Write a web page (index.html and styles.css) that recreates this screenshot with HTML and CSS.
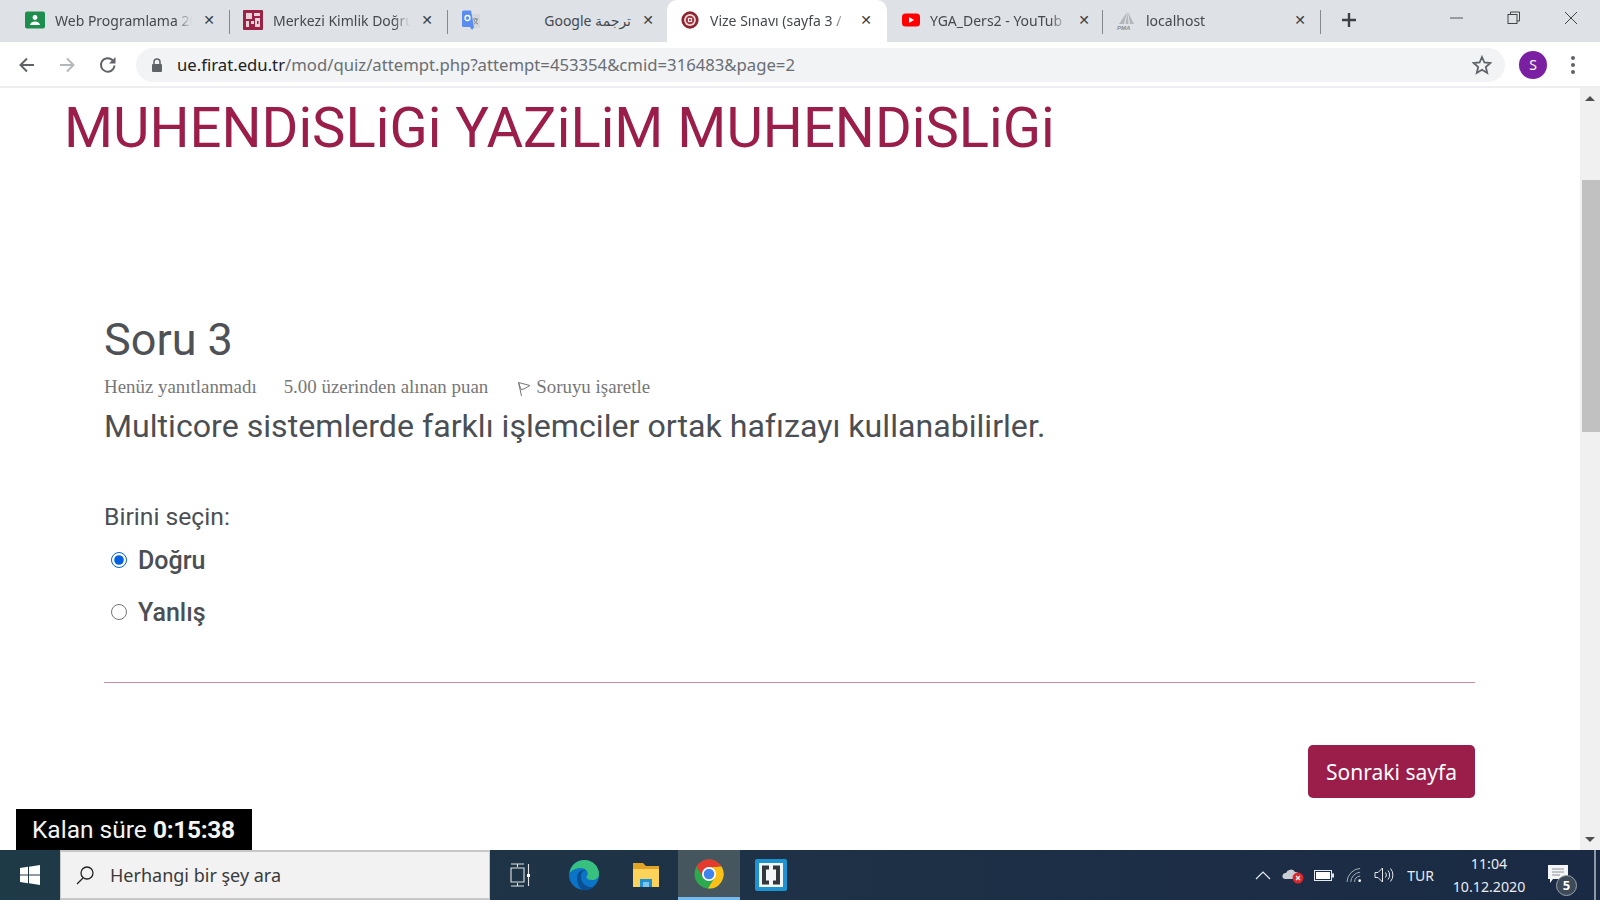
FILE: index.html
```html
<!DOCTYPE html>
<html lang="tr">
<head>
  <meta charset="UTF-8" />
  <title>Vize Sınavı (sayfa 3 / 5)</title>
  <link rel="stylesheet" href="styles.css">
</head>
<body>
  <div class="tabstrip">
    <div class="tab">
      <svg class="favicon" viewBox="0 0 20 20"><rect y="1.500" width="20" height="17" rx="2" fill="#1e8e4e"/><circle cx="10" cy="7.500" r="2.400" fill="#fff"/><path d="M5 15c.4-2.600 2.600-3.600 5-3.600s4.600 1 5 3.600z" fill="#fff"/></svg>
      <span class="tab-title">Web Programlama 20</span>
      <span class="tab-close">✕</span>
    </div>
    <div class="tab">
      <svg class="favicon" viewBox="0 0 20 20"><rect width="20" height="20" rx="1" fill="#9b2145"/><rect x="3" y="3" width="6" height="6" fill="#e9d3da"/><rect x="11" y="3" width="6" height="3" fill="#e9d3da"/><rect x="3" y="11" width="3" height="6" fill="#e9d3da"/><rect x="8" y="11" width="3" height="3" fill="#e9d3da"/><rect x="12" y="8" width="5" height="9" fill="#e9d3da"/><rect x="14" y="11" width="1.500" height="3" fill="#9b2145"/></svg>
      <span class="tab-title">Merkezi Kimlik Doğru</span>
      <span class="tab-close">✕</span>
    </div>
    <div class="tab wide">
      <svg class="favicon" viewBox="0 0 20 20"><path d="M9 4h9a1 1 0 0 1 1 1v12a1 1 0 0 1-1 1H9z" fill="#d3d6da"/><path d="M12 9h5M14.500 8v1M13 14c2-1 3-3 3-5M13 10c.6 2 2 3 4 4" fill="none" stroke="#80868b" stroke-width="1"/><path d="M1 2a1.500 1.500 0 0 1 1.500-1.500H10l3 17-2 2.500-2-3H2.500A1.500 1.500 0 0 1 1 16z" fill="#5a8df0"/><circle cx="6.500" cy="8" r="2.500" fill="none" stroke="#fff" stroke-width="1.300"/></svg>
      <span class="tab-title rtl">ترجمة Google</span>
      <span class="tab-close">✕</span>
    </div>
    <div class="tab active">
      <svg class="favicon" viewBox="-1 -1 22 22"><circle cx="10" cy="10" r="9.500" fill="#8e2430"/><circle cx="10" cy="10" r="6.500" fill="#ecdcdc"/><circle cx="10" cy="10" r="4.700" fill="#a2323c"/><rect x="7.700" y="7.700" width="4.600" height="4.600" fill="#f1e4e4"/><rect x="9" y="9" width="2" height="2" fill="#a2323c"/></svg>
      <span class="tab-title">Vize Sınavı (sayfa 3 /</span>
      <span class="tab-close">✕</span>
    </div>
    <div class="tab yt">
      <svg class="favicon" viewBox="0 0 20 20"><rect x="2" y="3.500" width="18" height="13" rx="3.500" fill="#f00"/><path d="M9 7v6l5-3z" fill="#fff"/></svg>
      <span class="tab-title">YGA_Ders2 - YouTub</span>
      <span class="tab-close">✕</span>
    </div>
    <div class="tab last">
      <svg class="favicon" viewBox="0 0 20 20"><path d="M11 2 3 14h5zM11.500 2 9.500 14h3zM12 2l6 12h-4z" fill="#b3b7bb"/><text x="1" y="19.500" class="pma">PMA</text></svg>
      <span class="tab-title">localhost</span>
      <span class="tab-close">✕</span>
    </div>
    <svg class="newtab" viewBox="0 0 16 16"><path d="M8 1v14M1 8h14" stroke="#3c4043" stroke-width="2.400"/></svg>
    <div class="winctl">
      <svg viewBox="0 0 14 14"><path d="M0 7h13" stroke="#555" stroke-width="1"/></svg>
      <svg viewBox="0 0 14 14"><path d="M3.500 3V1h9v9h-2.500" fill="none" stroke="#444"/><rect x="1" y="3.500" width="9" height="9" fill="none" stroke="#444"/></svg>
      <svg viewBox="0 0 14 14"><path d="M1 1l12 12M13 1 1 13" stroke="#444" stroke-width="1"/></svg>
    </div>
  </div>

  <div class="toolbar">
    <svg class="navicon" viewBox="0 0 20 20"><path d="M17 10H4M10 3.500 3.500 10l6.500 6.500" fill="none" stroke="#5f6368" stroke-width="2"/></svg>
    <svg class="navicon" viewBox="0 0 20 20"><path d="M3 10h13M10 3.500l6.500 6.500-6.500 6.500" fill="none" stroke="#b4b7bb" stroke-width="2"/></svg>
    <svg class="navicon reload" viewBox="0 0 20 20"><path d="M16.500 10.500a6.800 6.800 0 1 1-1.900-5.300" fill="none" stroke="#5f6368" stroke-width="2"/><path d="M17.500 2v6.500H11z" fill="#5f6368"/></svg>
    <div class="omnibox">
      <svg class="lock" viewBox="0 0 12 14"><path d="M3 6V4a3 3 0 0 1 6 0v2" fill="none" stroke="#5f6368" stroke-width="1.500"/><rect x="1" y="6" width="10" height="8" rx="1" fill="#5f6368"/></svg>
      <span class="url"><b>ue.firat.edu.tr</b>/mod/quiz/attempt.php?attempt=453354&amp;cmid=316483&amp;page=2</span>
      <svg class="star" viewBox="0 0 20 20"><path d="m10 2 2.400 5.500 6 .5-4.600 4 1.400 5.900L10 14.800l-5.200 3.100L6.200 12 1.600 8l6-.5z" fill="none" stroke="#5f6368" stroke-width="1.800"/></svg>
    </div>
    <div class="avatar">S</div>
    <div class="kebab"><i></i><i></i><i></i></div>
  </div>

  <div class="viewport">
    <main class="page">
      <h1 class="site-title">MUHENDiSLiGi YAZiLiM MUHENDiSLiGi</h1>
      <section class="question">
        <h2>Soru 3</h2>
        <div class="q-meta">
          <span>Henüz yanıtlanmadı</span>
          <span>5.00 üzerinden alınan puan</span>
          <span class="flag">
            <svg viewBox="0 0 14 16"><path d="M1.500 1.500 13 4.500 7 8l-3 .5zM1.500 1.500 4.500 15" fill="none" stroke="#777" stroke-width="1"/></svg>
            Soruyu işaretle
          </span>
        </div>
        <p class="q-text">Multicore sistemlerde farklı işlemciler ortak hafızayı kullanabilirler.</p>
        <p class="q-prompt">Birini seçin:</p>
        <label class="answer"><input type="radio" name="q3" checked> Doğru</label>
        <label class="answer"><input type="radio" name="q3"> Yanlış</label>
      </section>
      <div class="q-actions">
        <button class="next">Sonraki sayfa</button>
      </div>
    </main>
    <div class="scrollbar">
      <span class="arrow up"></span>
      <div class="thumb"></div>
      <span class="arrow down"></span>
    </div>
    <div class="timer">Kalan süre <b>0:15:38</b></div>
  </div>

  <div class="taskbar">
    <div class="start">
      <svg viewBox="0 0 20 20"><path d="M0 3l8-1.200V9.500H0zM9 1.700 20 0v9.500H9zM0 10.500h8v7.700L0 17zM9 10.500h11V20L9 18.300z" fill="#fff"/></svg>
    </div>
    <div class="search">
      <svg viewBox="0 0 20 20"><circle cx="12" cy="8" r="6" fill="none" stroke="#222" stroke-width="1.300"/><path d="M8 13 2 19" stroke="#222" stroke-width="1.300"/></svg>
      <span>Herhangi bir şey ara</span>
    </div>
    <div class="task-icons">
      <div class="task"><svg class="ico-view" viewBox="0 0 20 24"><path d="M1 1h13M7.500 1v3M1 23h13M7.500 20v3M1 5h13v14H1zM18.500 1v10M18.500 14v9" fill="none" stroke="#dfe3e6" stroke-width="1.100"/><rect x="17" y="11" width="3" height="3" fill="#fff"/></svg></div>
      <div class="task"><svg class="ico" viewBox="0 0 32 32"><circle cx="16" cy="16" r="15" fill="#0c74c6"/><path d="M1.500 14C3 6 9 1 16.500 1 25 1 31 7.500 31 15c0 4-3 6-7 6-3 0-5.500-1-5.500-3 0-1 1.300-1.500 1.300-3.500 0-3-3.300-5.500-7.300-5.500-5 0-9 3-11.500 5z" fill="#38c07e"/><path d="M9 19c0-5 4-9 9-8-4 1-5 4-5 7 0 6 5 11 13 10-3 2.500-7 4-11 3-4-2-6-7-6-12z" fill="#0a4f94"/></svg></div>
      <div class="task"><svg class="ico" viewBox="0 0 32 32"><path d="M3 4h10l3 3h13v6H3z" fill="#e0a526"/><path d="M3 10h26v18H3z" fill="#fbd35b"/><path d="M10 28v-8h12v8h-3v-5h-6v5z" fill="#1f8fd6"/><path d="M13 23h6v5h-6z" fill="#7cc4ee"/></svg></div>
      <div class="task on"><svg class="ico" viewBox="0 0 32 32"><circle cx="16" cy="16" r="14.500" fill="#2da94f"/><path d="M3.500 8.500A14.500 14.500 0 0 1 28.500 8.500L16 9.500 10 19z" fill="#e33b2e"/><path d="M28.500 8.500A14.500 14.500 0 0 1 15 30.500l7-11.500-6-9.500z" fill="#fbc116"/><circle cx="16" cy="16" r="7" fill="#fff"/><circle cx="16" cy="16" r="5.300" fill="#3f83ec"/></svg></div>
      <div class="task"><svg class="ico" viewBox="0 0 32 32"><rect width="32" height="32" rx="2" fill="#1d93d1"/><rect x="4" y="4" width="24" height="24" fill="#f3f6f8"/><path d="M14 8.500H9v15h5M18 8.500h5v15h-5" fill="none" stroke="#33383d" stroke-width="4"/></svg></div>
    </div>
    <div class="tray">
      <svg class="tr-chev" viewBox="0 0 16 9"><path d="M1 8 8 1l7 7" fill="none" stroke="#e6e9ec" stroke-width="1.200"/></svg>
      <svg class="tr-cloud" viewBox="0 0 22 18"><path d="M3 13a3 3 0 0 1 1-6 5 5 0 0 1 9-1 4 4 0 0 1 3 7z" fill="#c9ced4"/><circle cx="16" cy="12" r="5.500" fill="#d9262f"/><path d="m14 10 4 4m0-4-4 4" stroke="#fff" stroke-width="1.200"/></svg>
      <svg class="tr-batt" viewBox="0 0 20 11"><rect x=".5" y=".5" width="17" height="10" fill="none" stroke="#e6e9ec"/><rect x="2" y="2" width="14" height="7" fill="#fff"/><rect x="18" y="3.500" width="2" height="4" fill="#e6e9ec"/></svg>
      <svg class="tr-wifi" viewBox="0 0 18 17"><path d="M1 16A15 15 0 0 1 15 1.500M5 16A11 11 0 0 1 15 5.500M9 16a7 7 0 0 1 6-6.500" fill="none" stroke="#aeb6bd" stroke-width="1"/><circle cx="14.500" cy="14.500" r="1.400" fill="#fff"/></svg>
      <svg class="tr-vol" viewBox="0 0 20 16"><path d="M1 5.500h3L8.500 1v14L4 10.500H1z" fill="none" stroke="#e6e9ec"/><path d="M11.500 5.500a4 4 0 0 1 0 5M14 3.500a7 7 0 0 1 0 9M16.500 1.500a10 10 0 0 1 0 13" fill="none" stroke="#e6e9ec"/></svg>
      <span class="tr-lang">TUR</span>
      <div class="clock"><span>11:04</span><span>10.12.2020</span></div>
      <div class="notif">
        <svg viewBox="0 0 20 19"><path d="M0 0h20v14H5l-3 4v-4H0z" fill="#f4f5f6"/><path d="M4 4h12M4 7h12M4 10h8" stroke="#8a929a" stroke-width="1"/></svg>
        <span class="badge">5</span>
      </div>
    </div>
  </div>
</body>
</html>
```

FILE: styles.css
```css
* {
  box-sizing: border-box;
}
html, body {
  height: 100%;
}
body {
  margin: 0;
  width: 1600px;
  height: 900px;
  overflow: hidden;
  display: flex;
  flex-direction: column;
  font-family: Roboto, Arial, sans-serif;
  background: #fff;
}

/* browser tabs */
.tabstrip {
  height: 42px;
  flex: none;
  display: flex;
  align-items: stretch;
  padding-left: 12px;
  background: #dee1e6;
}
.tab {
  width: 218px;
  position: relative;
  display: flex;
  align-items: center;
  padding: 0 14px 2px 13px;
  gap: 10px;
  font-family: "Noto Sans", Arial, sans-serif;
  font-size: 14px;
  color: #45494e;
}
.tab.wide {
  width: 219px;
  padding-right: 12px;
}
.tab.active {
  width: 220px;
  padding-right: 14px;
  background: #fff;
  border-radius: 10px 10px 0 0;
}
.tab.yt {
  width: 216px;
  padding-right: 12px;
}
.tab::after {
  content: "";
  position: absolute;
  right: 0;
  top: 10px;
  height: 24px;
  width: 1px;
  background: #85888c;
}
.tab:nth-child(3)::after,
.tab:nth-child(4)::after {
  display: none;
}
.favicon {
  width: 20px;
  height: 20px;
  flex: none;
}
.pma {
  font: italic bold 6px "Liberation Sans", sans-serif;
  fill: #8a8e92;
}
.tab-title {
  flex: 1;
  min-width: 0;
  white-space: nowrap;
  overflow: hidden;
  -webkit-mask-image: linear-gradient(to right, #000 88%, transparent 100%);
  mask-image: linear-gradient(to right, #000 88%, transparent 100%);
}
.tab-title.rtl {
  direction: rtl;
  -webkit-mask-image: none;
  mask-image: none;
  font-family: "Noto Sans", "DejaVu Sans", sans-serif;
}
.tab-close {
  width: 14px;
  flex: none;
  font-family: "DejaVu Sans", sans-serif;
  font-size: 14px;
  line-height: 14px;
  font-weight: bold;
  color: #3c4043;
  text-align: center;
}
.newtab {
  width: 16px;
  height: 16px;
  margin: 12px 0 0 20px;
}
.winctl {
  margin-left: auto;
  display: flex;
  gap: 43px;
  padding: 11px 22px 0 0;
}
.winctl svg {
  width: 14px;
  height: 14px;
}

/* address bar */
.toolbar {
  height: 46px;
  flex: none;
  display: flex;
  align-items: center;
  padding: 1px 0 0 17px;
  background: #fff;
  border-bottom: 2px solid #eceef0;
}
.navicon {
  width: 20px;
  height: 20px;
  margin-right: 20px;
}
.navicon.reload {
  margin-left: 1px;
  margin-right: 19px;
}
.omnibox {
  width: 1369px;
  height: 34px;
  margin-left: -1px;
  display: flex;
  align-items: center;
  padding: 0 13px 0 15px;
  background: #f1f3f4;
  border-radius: 17px;
}
.lock {
  width: 12px;
  height: 14px;
  margin-right: 14px;
}
.url {
  flex: 1;
  font-family: "Noto Sans", Arial, sans-serif;
  font-size: 16.700px;
  color: #6a6e73;
  white-space: nowrap;
}
.url b {
  font-weight: normal;
  color: #202124;
}
.star {
  width: 20px;
  height: 20px;
}
.avatar {
  width: 28px;
  height: 28px;
  margin-left: 14px;
  border-radius: 50%;
  background: #7b1fa2;
  color: #fff;
  font-family: "Noto Sans", Arial, sans-serif;
  font-size: 14px;
  line-height: 28px;
  text-align: center;
}
.kebab {
  margin-left: 24px;
  display: flex;
  flex-direction: column;
  gap: 3px;
}
.kebab i {
  width: 4px;
  height: 4px;
  border-radius: 50%;
  background: #5f6368;
}

/* page */
.viewport {
  flex: 1;
  min-height: 0;
  position: relative;
  display: flex;
  overflow: hidden;
}
.page {
  flex: 1;
  min-width: 0;
  padding: 0 105px 0 64px;
}
.site-title {
  margin: 7px 0 0;
  font-size: 56.200px;
  line-height: 66px;
  font-weight: 400;
  color: #9b1d4a;
  white-space: nowrap;
}
.question {
  margin: 0 0 0 40px;
  padding-bottom: 44px;
  border-bottom: 1px solid #d08ba3;
}
.question h2 {
  margin: 152px 0 0;
  font-size: 45px;
  line-height: 54px;
  font-weight: 400;
  color: #4e5155;
}
.q-meta {
  margin-top: 8px;
  display: flex;
  gap: 27px;
  font-family: "Liberation Serif", serif;
  font-size: 18.900px;
  line-height: 24px;
  color: #777;
}
.flag {
  display: flex;
  align-items: center;
  gap: 5px;
  margin-left: 2px;
}
.flag svg {
  width: 14px;
  height: 16px;
  margin-top: 3px;
}
.q-text {
  margin: 7px 0 0;
  font-size: 32.150px;
  line-height: 40px;
  color: #4b4f54;
}
.q-prompt {
  margin: 53px 0 0;
  font-size: 24.700px;
  line-height: 35px;
  color: #4b4f54;
}
.answer {
  height: 52px;
  display: flex;
  align-items: center;
  gap: 11px;
  padding-left: 7px;
  font-size: 25px;
  font-weight: 500;
  color: #4b4f54;
}
.answer input {
  width: 16px;
  height: 16px;
  margin: 0;
  accent-color: #0060df;
}
.q-actions {
  margin-top: 62px;
  display: flex;
  justify-content: flex-end;
}
.next {
  width: 167px;
  height: 53px;
  border: 0;
  border-radius: 5px;
  background: #9b1d4a;
  color: #fff;
  font-family: "Noto Sans", Arial, sans-serif;
  font-size: 21px;
}
.scrollbar {
  width: 20px;
  flex: none;
  position: relative;
  background: #f0f0f0;
}
.thumb {
  position: absolute;
  top: 92px;
  left: 2px;
  width: 18px;
  height: 252px;
  background: #c1c1c1;
}
.arrow {
  position: absolute;
  left: 5px;
  border-left: 5px solid transparent;
  border-right: 5px solid transparent;
}
.arrow.up {
  top: 8px;
  border-bottom: 5px solid #505050;
}
.arrow.down {
  bottom: 8px;
  border-top: 5px solid #505050;
}
.timer {
  position: absolute;
  left: 16px;
  bottom: 0;
  width: 236px;
  height: 41px;
  padding-left: 16px;
  background: #000;
  color: #f4f4f4;
  font-size: 24.500px;
  line-height: 42px;
  white-space: nowrap;
}
.timer b {
  letter-spacing: -.3px;
}

/* windows taskbar */
.taskbar {
  height: 50px;
  flex: none;
  display: flex;
  align-items: stretch;
  background: linear-gradient(to right, #1f3a47, #1e3146 50%, #1a2a44);
}
.start {
  width: 60px;
  display: flex;
  align-items: center;
  justify-content: center;
}
.start svg {
  width: 20px;
  height: 20px;
}
.search {
  width: 430px;
  display: flex;
  align-items: center;
  gap: 15px;
  padding-left: 14px;
  background: #f2f2f2;
  border: 2px solid #c5c7c9;
  border-width: 2px 1px 2px 1px;
  font-family: "Noto Sans", Arial, sans-serif;
  font-size: 18px;
  color: #3a3a3a;
}
.search svg {
  width: 20px;
  height: 20px;
}
.task-icons {
  display: flex;
}
.task {
  width: 62.500px;
  display: flex;
  align-items: center;
  justify-content: center;
}
.task.on {
  background: #46565f;
  border-bottom: 3px solid #76b9ed;
}
.ico {
  width: 32px;
  height: 32px;
}
.ico-view {
  width: 20px;
  height: 24px;
  margin-right: 3px;
}
.tray {
  margin-left: auto;
  display: flex;
  align-items: center;
  padding-right: 4px;
  color: #e9ecef;
  font-family: "Noto Sans", Arial, sans-serif;
  position: relative;
}
.tr-chev {
  width: 16px;
  height: 9px;
  margin-right: 11px;
}
.tr-cloud {
  width: 22px;
  height: 18px;
  margin-right: 10px;
}
.tr-batt {
  width: 20px;
  height: 11px;
  margin-right: 12px;
}
.tr-wifi {
  width: 17px;
  height: 16px;
  margin-right: 11px;
}
.tr-vol {
  width: 20px;
  height: 16px;
  margin-right: 13px;
}
.tr-lang {
  font-size: 14px;
  margin-right: 19px;
}
.clock {
  width: 72px;
  display: flex;
  flex-direction: column;
  align-items: center;
  gap: 3px;
  font-size: 14.200px;
  line-height: 20px;
}
.notif {
  width: 50px;
  height: 50px;
  position: relative;
  margin-left: 21px;
  border-right: 2px solid #8b98a5;
}
.notif svg {
  position: absolute;
  left: 2px;
  top: 15px;
  width: 20px;
  height: 19px;
}
.badge {
  position: absolute;
  left: 10px;
  top: 25px;
  width: 21px;
  height: 21px;
  border-radius: 50%;
  background: #3d4a57;
  border: 1px solid #9aa3ab;
  color: #fff;
  font-size: 13px;
  font-weight: bold;
  line-height: 19px;
  text-align: center;
}
```
